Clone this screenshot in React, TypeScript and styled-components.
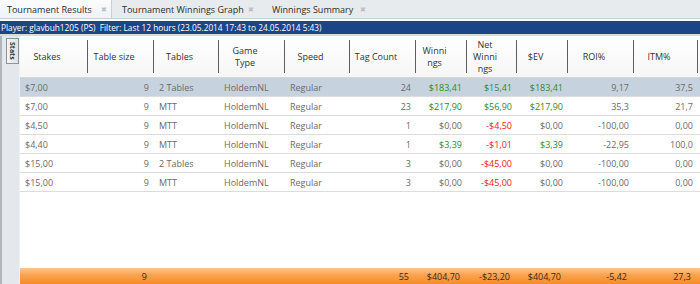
import React from "react";
import styled, { createGlobalStyle } from "styled-components";

const Global = createGlobalStyle`
  html, body { margin: 0; padding: 0; background: #fff; }
  body { font-family: "Open Sans", "Noto Sans", sans-serif; }
`;

const COLS = "68px 66px 65px 66px 65px 66px 51px 50px 51px 66px 64px";

const Page = styled.div`
  width: 700px;
  height: 284px;
  display: flex;
  flex-direction: column;
  overflow: hidden;
  font-size: 9px;
`;

const TabBar = styled.div`
  height: 19px;
  display: flex;
  align-items: stretch;
  background: #e8ebee;
  border-bottom: 1px solid #c9ced4;
  box-sizing: border-box;
`;

const Tab = styled.div<{ $active?: boolean; $w: number; $pl: number }>`
  width: ${(p) => p.$w}px;
  box-sizing: border-box;
  display: flex;
  align-items: center;
  justify-content: space-between;
  padding: 0 4px 0 ${(p) => p.$pl}px;
  color: #2b2b2b;
  background: ${(p) => (p.$active ? "linear-gradient(#fbfcfd, #eef3f8)" : "transparent")};
  border-right: ${(p) => (p.$active ? "1px solid #c9ced4" : "none")};
  white-space: nowrap;
`;

const Close = styled.span`
  color: #b9bdc2;
  font-size: 7px;
`;

const InfoBar = styled.div`
  height: 13px;
  margin-top: 2px;
  background: #1b4587;
  color: #fff;
  font-size: 8.3px;
  line-height: 13px;
  padding-left: 1px;
  white-space: nowrap;
  border-bottom: 2px solid #d5dbe3;
`;

const Body = styled.div`
  flex: 1;
  display: flex;
  min-height: 0;
`;

const Strip = styled.div`
  width: 20px;
  background: #e4e7eb;
  border-left: 2px solid #b2b6bb;
  border-right: 1px solid #eef0f2;
  box-sizing: border-box;
  padding: 2px 0 0 4px;
`;

const StatsTab = styled.div`
  width: 13px;
  height: 26px;
  box-sizing: border-box;
  border: 1px solid #8e949b;
  background: linear-gradient(90deg, #f4f5f7, #dfe2e6);
  display: flex;
  align-items: center;
  justify-content: center;
`;

const StatsLabel = styled.span`
  writing-mode: vertical-rl;
  font-size: 7px;
  font-weight: 700;
  color: #333;
`;

const Main = styled.div`
  flex: 1;
  display: flex;
  flex-direction: column;
  min-width: 0;
`;

const Grid = styled.div`
  display: grid;
  grid-template-columns: ${COLS};
`;

const Header = styled(Grid)`
  height: 42px;
  background: linear-gradient(#ffffff, #f6f6f6);
  border-bottom: 1px solid #d7d7d7;
  box-sizing: border-box;
`;

const HeadCell = styled.div`
  display: flex;
  align-items: center;
  justify-content: center;
  text-align: center;
  color: #333;
  line-height: 12px;
  position: relative;
  padding: 0 14px 0 0;
  &::after {
    content: "";
    position: absolute;
    right: 0;
    top: 4px;
    bottom: 4px;
    width: 1px;
    background: #5e5e5e;
  }
`;

const Row = styled(Grid)<{ $sel?: boolean }>`
  height: 19px;
  box-sizing: border-box;
  background: ${(p) => (p.$sel ? "#c6d3df" : "#fff")};
  border-bottom: 1px solid #dcdcdc;
  color: #6a6a6a;
`;

const Cell = styled.div<{ $align?: string; $color?: string; $pr?: number }>`
  display: flex;
  align-items: center;
  justify-content: ${(p) => (p.$align === "r" ? "flex-end" : "flex-start")};
  padding: ${(p) => (p.$align === "r" ? `0 ${p.$pr ?? 5}px 0 0` : "0 0 0 5px")};
  color: ${(p) => p.$color || "inherit"};
  white-space: nowrap;
`;

const Filler = styled.div`
  flex: 1;
  background: #fff;
`;

const Footer = styled(Grid)`
  height: 16px;
  background: linear-gradient(#fcc791, #f9a24d 45%, #f78b28);
  color: #3b2a14;
`;

const G = "#2d8a2d";
const R = "#ee2222";

type C = [string, string?];
const rows: { sel?: boolean; cells: C[] }[] = [
  { sel: true, cells: [["$7,00"], ["9"], ["2 Tables"], ["HoldemNL"], ["Regular"], ["24"], ["$183,41", G], ["$15,41", G], ["$183,41", G], ["9,17"], ["37,5"]] },
  { cells: [["$7,00"], ["9"], ["MTT"], ["HoldemNL"], ["Regular"], ["23"], ["$217,90", G], ["$56,90", G], ["$217,90", G], ["35,3"], ["21,7"]] },
  { cells: [["$4,50"], ["9"], ["MTT"], ["HoldemNL"], ["Regular"], ["1"], ["$0,00"], ["-$4,50", R], ["$0,00"], ["-100,00"], ["0,00"]] },
  { cells: [["$4,40"], ["9"], ["MTT"], ["HoldemNL"], ["Regular"], ["1"], ["$3,39", G], ["-$1,01", R], ["$3,39", G], ["-22,95"], ["100,0"]] },
  { cells: [["$15,00"], ["9"], ["2 Tables"], ["HoldemNL"], ["Regular"], ["3"], ["$0,00"], ["-$45,00", R], ["$0,00"], ["-100,00"], ["0,00"]] },
  { cells: [["$15,00"], ["9"], ["MTT"], ["HoldemNL"], ["Regular"], ["3"], ["$0,00"], ["-$45,00", R], ["$0,00"], ["-100,00"], ["0,00"]] },
];

const align = ["l", "r", "l", "l", "l", "r", "r", "r", "r", "r", "r"];

const headers: React.ReactNode[] = [
  "Stakes",
  "Table size",
  "Tables",
  <>Game<br />Type</>,
  "Speed",
  "Tag Count",
  <>Winni<br />ngs</>,
  <>Net<br />Winni<br />ngs</>,
  "$EV",
  "ROI%",
  "ITM%",
];

const footer = ["", "9", "", "", "", "55", "$404,70", "-$23,20", "$404,70", "-5,42", "27,3"];

export default function App() {
  return (
    <Page>
      <Global />
      <TabBar>
        <Tab $active $w={112} $pl={7}>
          <span>Tournament Results</span>
          <Close>✖</Close>
        </Tab>
        <Tab $w={146} $pl={10}>
          <span>Tournament Winnings Graph</span>
          <Close>✖</Close>
        </Tab>
        <Tab $w={112} $pl={14}>
          <span>Winnings Summary</span>
          <Close>✖</Close>
        </Tab>
      </TabBar>
      <InfoBar>Player: glavbuh1205 (PS)&nbsp;&nbsp;Filter: Last 12 hours (23.05.2014 17:43 to 24.05.2014 5:43)</InfoBar>
      <Body>
        <Strip>
          <StatsTab>
            <StatsLabel>Stats</StatsLabel>
          </StatsTab>
        </Strip>
        <Main>
          <Header>
            {headers.map((h, i) => (
              <HeadCell key={i}>{h}</HeadCell>
            ))}
          </Header>
          {rows.map((r, i) => (
            <Row key={i} $sel={r.sel}>
              {r.cells.map(([t, c], j) => (
                <Cell key={j} $align={align[j]} $color={c}>
                  {t}
                </Cell>
              ))}
            </Row>
          ))}
          <Filler />
          <Footer>
            {footer.map((t, j) => (
              <Cell key={j} $align="r" $pr={7}>
                {t}
              </Cell>
            ))}
          </Footer>
        </Main>
      </Body>
    </Page>
  );
}
